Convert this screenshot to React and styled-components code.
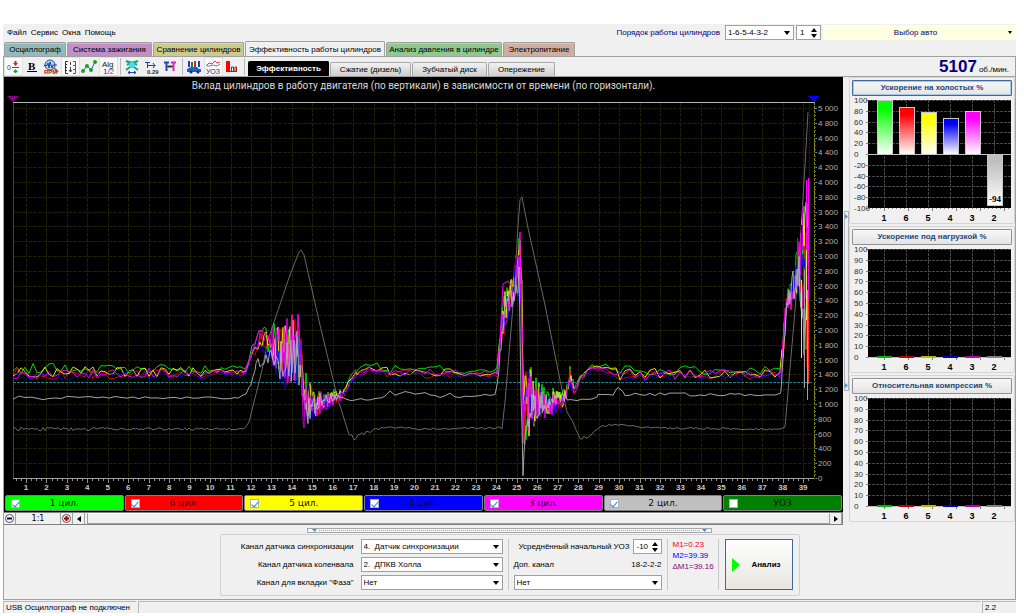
import React from 'react'
import styled, { createGlobalStyle } from 'styled-components'

const CYLINDERS = [
    { name: '1', title: '1 цил.', color: '#00ff00', dim: '#00b800', bar: 100, offset: -3, checked: true },
    { name: '6', title: '6 цил.', color: '#ff0000', dim: '#c00000', bar: 87, offset: 2, checked: true },
    { name: '5', title: '5 цил.', color: '#ffff00', dim: '#b8b800', bar: 77, offset: 0, checked: true },
    { name: '4', title: '4 цил.', color: '#0000ff', dim: '#0000c8', bar: 66, offset: 3, checked: true },
    { name: '3', title: '3 цил.', color: '#ff00ff', dim: '#b800b8', bar: 80, offset: 1, checked: true },
    { name: '2', title: '2 цил.', color: '#c0c0c0', dim: '#808080', bar: -94, offset: 0, checked: true },
]

const TABS = [
    { title: 'Осциллограф', width: 62, color: '#93bab9' },
    { title: 'Система зажигания', width: 85, color: '#c48ec4' },
    { title: 'Сравнение цилиндров', width: 91, color: '#cbca8f' },
    { title: 'Эффективность работы цилиндров', width: 140, active: true },
    { title: 'Анализ давления в цилиндре', width: 116, color: '#90c890' },
    { title: 'Электропитание', width: 72, color: '#cfae9f' },
]

const SUB_TABS = [
    { title: 'Эффективность', width: 81, active: true },
    { title: 'Сжатие (дизель)', width: 81 },
    { title: 'Зубчатый диск', width: 75 },
    { title: 'Опережение', width: 67 },
]

// every point is [x, y, noise, step]
const CYLINDER_PATH = [
    [13, 372, 6, 4], [240, 372, 4, 4], [246, 370, 2, 3], [252, 352, 4, 3], [260, 340, 9, 2],
    [266, 340, 14, 2], [272, 346, 20, 1], [278, 350, 26, 1], [285, 352, 34, 1], [297, 346, 38, 1], [301, 352, 24, 1],
    [303, 395, 20, 1], [308, 398, 22, 1], [315, 403, 14, 1], [326, 400, 9, 1], [338, 397, 6, 1], [344, 392, 3, 2],
    [350, 382, 4, 3], [357, 372, 3, 4], [372, 368, 3, 5], [390, 372, 5, 5], [497, 373, 3, 2],
    [501, 335, 12, 1], [505, 308, 20, 1], [511, 292, 14, 1], [517, 272, 28, 1], [520, 265, 34, 1],
    [522, 340, 60, 1], [523, 410, 45, 1], [528, 402, 38, 1], [536, 402, 24, 1], [545, 403, 14, 1],
    [562, 400, 9, 1], [567, 392, 5, 1], [570, 375, 8, 1], [574, 390, 4, 3], [580, 378, 5, 4],
    [592, 367, 3, 5], [606, 370, 3, 5], [620, 374, 6, 5], [780, 373, 4, 2], [783, 352, 14, 1],
    [786, 304, 14, 1], [793, 290, 16, 1], [798, 270, 24, 1], [801, 270, 44, 1], [803, 275, 64, 1],
    [806, 285, 90, 1], [810, 290, 95, 1],
]

const SECOND_PATH = [
    [13, 398, 2, 6], [238, 398, 1, 4], [246, 393, 1, 3], [251, 384, 1, 2], [256, 362, 5, 2],
    [268, 358, 12, 2], [280, 362, 20, 1], [297, 356, 26, 1], [302, 372, 20, 1], [305, 415, 14, 1],
    [310, 405, 16, 1], [320, 400, 8, 1], [338, 396, 3, 3], [346, 400, 1, 5], [372, 399, 1, 5],
    [385, 394, 3, 5], [495, 396, 2, 2], [499, 365, 8, 1], [504, 312, 12, 1], [512, 298, 12, 1],
    [519, 280, 16, 1], [521, 390, 10, 1], [523, 475, 2, 1], [525, 440, 10, 1], [530, 405, 22, 1],
    [545, 402, 10, 1], [568, 396, 4, 2], [572, 400, 1, 5], [592, 399, 1, 5], [598, 395, 2, 5],
    [613, 394, 2, 3], [618, 387, 1, 5], [625, 394, 2, 5], [778, 395, 1, 2], [781, 392, 1, 1], [784, 340, 4, 1],
    [788, 300, 10, 1], [799, 265, 26, 1], [803, 300, 60, 1], [805, 330, 70, 1], [809, 320, 70, 1],
]

const RPM_PATH = [
    [13, 429, 2, 2], [244, 429, 1, 2], [249, 422, 0, 4], [262, 370, 0, 4], [268, 340, 0, 5],
    [278, 310, 1, 5], [290, 275, 0, 5], [299, 252, 0, 1], [301, 250, 0, 2], [304, 255, 0, 4],
    [320, 325, 0, 5], [338, 400, 0, 4], [349, 434, 1, 3], [354, 438, 2, 2], [372, 430, 2, 2],
    [390, 427, 1, 2], [420, 429, 1, 2], [502, 428, 1, 2], [505, 402, 0, 2], [511, 330, 0, 2],
    [515, 280, 0, 2], [518, 225, 0, 1], [520, 200, 0, 1], [522, 197, 0, 1], [528, 228, 0, 4],
    [545, 305, 0, 5], [560, 380, 0, 4], [567, 412, 0, 4], [573, 422, 0, 3], [580, 438, 2, 2],
    [588, 437, 1, 3], [600, 427, 1, 3], [615, 424, 1, 3], [650, 428, 1, 2], [780, 429, 1, 2],
    [785, 427, 0, 2], [789, 380, 0, 2], [795, 310, 0, 2], [801, 230, 0, 2], [805, 165, 0, 2],
    [808, 112, 0, 2], [810, 103, 0, 2],
]

const makeTrace = (points, seed, offset) => {
    let state = seed * 7919 + 17
    const random = () => {
        state = (state * 16807) % 2147483647
        return state / 2147483647
    }
    let d = ''
    for (let i = 0; i < points.length - 1; i++) {
        const [x0, y0, n0, step] = points[i]
        const [x1, y1, n1] = points[i + 1]
        for (let x = x0; x < x1; x += step) {
            const k = (x - x0) / (x1 - x0)
            const noise = (n0 + (n1 - n0) * k) * (random() * 2 - 1)
            const y = Math.min(477, Math.max(103, y0 + (y1 - y0) * k + offset + noise))
            d += `${d ? 'L' : 'M'}${x} ${y.toFixed(1)}`
        }
    }
    return d
}

const xAt = (value) => 26 + (value - 1) * 20.45
const yAt = (value) => 478 - value * 0.074
const range = (count) => Array.from({ length: count }, (_, i) => i)
const thousands = (value) => String(value).replace(/(\d)(\d{3})$/, '$1 $2')

const MainChart = () => (
    <ChartSvg viewBox="4 94 839 401" role="img" aria-label="Вклад цилиндров">
        <g stroke="#1f1f05" strokeDasharray="4 1">
            {range(39).map((i) => <path key={i} d={`M${Math.round(xAt(i + 1)) + 0.5} 103V478`} />)}
            {range(25).map((i) => <path key={i} d={`M13 ${Math.round(yAt((i + 1) * 200)) + 0.5}H813`} />)}
        </g>
        <path d="M13.5 103V478" stroke="#1f5a1f" />
        <path d="M13 102.5H814" stroke="#b8b8b8" />
        <path d="M13 478.5H814" stroke="#a0a0a0" />
        <path d="M814.5 102V478" stroke="#8a8a30" strokeDasharray="3 1" />
        <g stroke="#909090">
            {range(156).map((i) => (
                <path key={i} d={`M${Math.round(xAt(0.5 + i / 4)) + 0.5} 479v${i % 4 === 2 ? 4 : 2}`} />
            ))}
            {range(26).map((i) => <path key={i} d={`M814 ${Math.round(yAt(i * 200)) + 0.5}h3`} />)}
            {range(100).map((i) => <path key={i} d={`M814 ${Math.round(yAt(i * 50)) + 0.5}h2`} stroke="#606030" />)}
        </g>
        <path d="M13 382.5H813" stroke="#008c8c" strokeDasharray="3 1" />
        <g fill="none" strokeLinejoin="round" strokeWidth="1">
            <path d={makeTrace(RPM_PATH, 3, 0)} stroke="#686868" />
            {CYLINDERS.slice(0, 5).map((c, i) => (
                <path key={c.name} d={makeTrace(CYLINDER_PATH, i + 11, c.offset)} stroke={c.color} opacity="0.85" />
            ))}
            <path d={makeTrace(SECOND_PATH, 29, 0)} stroke="#b4b4b4" opacity="0.9" />
            <path d="M243 374L250 358L256 340L259 330L264 332L268 336M298 336L298 314L300 345" stroke="#e000e0" />
            <path d="M497 374L500 340L503 284L508 281L511 285M519 250L520 232L521 300L523 345" stroke="#ff00ff" />
            <path d="M301 340L303 420L304 428L305 400" stroke="#c000c0" />
            <path d="M801.5 225V330" stroke="#0000d0" />
            <path d="M802.5 205V250M797.5 238V260" stroke="#c000c0" />
            <path d="M804.5 270V388M807.5 290V400" stroke="#a0a0a0" />
            <path d="M801.5 280V358M806.5 240V320" stroke="#e8e060" />
            <path d="M808.5 260V384" stroke="#ff3030" />
            <path d="M809.5 104V250" stroke="#0000b8" />
            <path d="M806.5 180V250M808.5 178V300" stroke="#ff00ff" />
        </g>
        <path d="M7 96H19L13 102Z" fill="#8a008a" />
        <path d="M808 96H820L814 102Z" fill="#0000ff" />
        <g fill="#c8c8c8" fontSize="8" fontWeight="700" textAnchor="middle">
            {range(39).map((i) => <text key={i} x={xAt(i + 1)} y="490">{i + 1}</text>)}
        </g>
        <g fill="#b0b0b0" fontSize="8">
            {range(26).map((i) => <text key={i} x="818" y={yAt(i * 200) + 3}>{thousands(i * 200)}</text>)}
        </g>
    </ChartSvg>
)

const BarChart = ({ signed }) => {
    const zero = signed ? 58 : 112
    const label = (i) => (signed ? 100 - i * 20 : 100 - i * 10)
    const tick = (i) => 4 + (i * 108) / 10
    return (
        <ChartSvg viewBox="0 0 160 127">
            <defs>
                {CYLINDERS.map((c) => (
                    <linearGradient key={c.name} id={`bar${c.name}`} x1="0" y1="0" x2="0" y2="1">
                        <stop offset="0.15" stopColor={c.color} />
                        <stop offset="1" stopColor="#ffffff" />
                    </linearGradient>
                ))}
            </defs>
            <path d="M16 4H159V112H16Z" fill="#000" />
            <g stroke="#484848" strokeDasharray="3 1">
                {range(10).map((i) => <path key={i} d={`M16 ${Math.round(tick(i)) + 0.5}H159`} />)}
                {CYLINDERS.map((c, i) => <path key={c.name} d={`M${32 + i * 22}.5 4V112`} />)}
            </g>
            <g stroke="#808080">
                {range(11).map((i) => <path key={i} d={`M14 ${Math.round(tick(i)) + 0.5}h2`} />)}
                {range(36).map((i) => <path key={i} d={`M${16 + i * 4}.5 112v${i % 6 === 4 ? 3 : 1}`} />)}
            </g>
            <path d={`M16 ${zero}.5H159`} stroke="#c0c0c0" />
            {CYLINDERS.map((c, i) => {
                const x = 25 + i * 22
                const size = Math.round(Math.abs(c.bar) * 0.54)
                if (!signed) return <path key={c.name} d={`M${x} 112h15`} stroke={c.dim} strokeWidth="2" />
                return (
                    <rect
                        key={c.name} x={x + 0.5} y={c.bar > 0 ? zero - size + 0.5 : zero + 0.5} width="15" height={size}
                        fill={`url(#bar${c.name})`} stroke="#c8c8c8"
                    />
                )
            })}
            {signed && (
                <text x="143" y="106" fontSize="9" fontWeight="700" fontFamily="Liberation Serif, serif" textAnchor="middle">
                    -94
                </text>
            )}
            <g fill="#303030" fontSize="8">
                {range(11).map((i) => <text key={i} x="2" y={tick(i) + 3}>{label(i)}</text>)}
            </g>
            <g fill="#000" fontSize="9" fontWeight="700" textAnchor="middle">
                {CYLINDERS.map((c, i) => <text key={c.name} x={32 + i * 22} y="125">{c.name}</text>)}
            </g>
        </ChartSvg>
    )
}

const Dropdown = ({ id, label, options }) => (
    <SelectWrap>
        <Select id={id} aria-label={label}>
            {options.map((option) => <option key={option}>{option}</option>)}
        </Select>
        <SelectArrow viewBox="0 0 6 4"><path d="M0 0H6L3 4Z" /></SelectArrow>
    </SelectWrap>
)

const Spinner = ({ id, label, value, width }) => (
    <SpinnerWrap $width={width}>
        <SpinnerInput id={id} aria-label={label} type="text" defaultValue={value} />
        <SpinnerButtons>
            <SpinnerButton aria-label="Больше"><svg viewBox="0 0 6 4"><path d="M0 4H6L3 0Z" /></svg></SpinnerButton>
            <SpinnerButton aria-label="Меньше"><svg viewBox="0 0 6 4"><path d="M0 0H6L3 4Z" /></svg></SpinnerButton>
        </SpinnerButtons>
    </SpinnerWrap>
)

const ICONS = {
    zero: (
        <>
            <text x="3" y="12" fontSize="7" fill="#404060">0</text>
            <path d="M8 9.5H15" stroke="#008040" />
            <path d="M11.5 8L9 5H10.5V3H12.5V5H14Z" fill="#e02020" />
            <path d="M11.5 11L14 14H12.5V15H10.5V14H9Z" fill="#20a040" />
        </>
    ),
    bold: (
        <>
            <text x="5" y="12" fontSize="11" fontWeight="700" fontFamily="Liberation Serif, serif">B</text>
            <path d="M4 13.5H14" stroke="#000" />
        </>
    ),
    rpm: (
        <>
            <circle cx="8" cy="7" r="5" fill="#a8d8f4" stroke="#305090" />
            <path d="M12 10L16 14" stroke="#a07030" strokeWidth="2" />
            <path d="M2 7.5H5L6 5L7 10L8 4L10 10L11 7H15" stroke="#2040a0" fill="none" />
            <text x="2" y="16" fontSize="6" fontWeight="700" fill="#b02020">RPM</text>
        </>
    ),
    ruler: (
        <>
            <path d="M7 3.5H4.5V15.5H7M4 6.5H6M4 9.5H6M4 12.5H6" stroke="#303030" fill="none" />
            <path d="M9.5 4V7M9.5 9V14M8 12L9.5 14L11 12" stroke="#404040" fill="none" />
            <path d="M12 3.5H14.5V7.5H12M14.5 7.5V11.5H12M12 11.5H14.5V15.5H12" stroke="#e02020" fill="none" />
        </>
    ),
    nodes: (
        <>
            <path d="M3 13L7 8L11 12L15 4" stroke="#2060c0" fill="none" />
            <g fill="#20a020">
                <circle cx="3" cy="13" r="2" /><circle cx="7" cy="8" r="2" />
                <circle cx="11" cy="12" r="2" /><circle cx="15" cy="4" r="2" />
            </g>
        </>
    ),
    alg: (
        <>
            <text x="3" y="9" fontSize="8" fill="#202020">Alg</text>
            <text x="4" y="16" fontSize="8" fill="#2020e0">1/<tspan fill="#e02020">2</tspan></text>
        </>
    ),
    engine: (
        <>
            <path d="M3 3Q9 6 15 3M4 7Q9 3 14 7M3 12L7 9H11L15 12" stroke="#20a080" fill="none" strokeWidth="2" />
            <circle cx="9" cy="7" r="3" fill="#40e0e8" />
            <path d="M5 14.5H13M7 13L5 14.5L7 16M11 13L13 14.5L11 16" stroke="#2040c0" fill="none" />
        </>
    ),
    shift: (
        <>
            <path d="M3 4.5H8M5.5 4V10M5 7.5H13M11 5L13 7.5L11 10" stroke="#2040a0" fill="none" />
            <text x="5" y="16" fontSize="6" fontWeight="700" fill="#303030">0.29</text>
        </>
    ),
    marks: (
        <>
            <path d="M3 4.5H8M5.5 4V13" stroke="#2040c0" strokeWidth="2" fill="none" />
            <path d="M10 4.5H15M12.5 4V13" stroke="#e020c0" strokeWidth="2" fill="none" />
            <path d="M6 8.5H12M8 7V10M10 7V10" stroke="#303030" fill="none" />
        </>
    ),
    car: (
        <>
            <path d="M4 3V9M14 3V9" stroke="#2040c0" strokeWidth="2" />
            <path d="M7 4V9" stroke="#208040" strokeWidth="2" />
            <path d="M10 3V9" stroke="#e02020" strokeWidth="2" />
            <path d="M2 11L6 9H12L14 11H16V14H2Z" fill="#2060d0" />
            <circle cx="6" cy="14" r="1.5" fill="#203060" /><circle cx="13" cy="14" r="1.5" fill="#203060" />
        </>
    ),
    timing: (
        <>
            <path d="M2 8L5 5L8 6L11 3L13 5L16 4" stroke="#e04040" fill="none" />
            <path d="M3 8L6 8L9 7L13 8L16 6" stroke="#6080d0" fill="none" />
            <text x="2" y="16" fontSize="7" fill="#202090">УОЗ</text>
        </>
    ),
    bars: (
        <>
            <path d="M3 3H7V13H3Z" fill="#ff0000" />
            <path d="M3 13.5H14M8.5 13V9H10.5V13M12 13V9H13.5V13" stroke="#a02020" fill="none" />
        </>
    ),
}

const TOOLS = [
    { icon: 'zero', title: 'Ноль', pressed: true }, { icon: 'bold', title: 'Толщина' }, { icon: 'rpm', title: 'Обороты' },
    { icon: 'ruler', title: 'Шкала', pressed: true }, { icon: 'nodes', title: 'Точки' },
    { icon: 'alg', title: 'Алгоритм', pressed: true, divider: true },
    { icon: 'engine', title: 'Растянуть' }, { icon: 'shift', title: 'Сдвиг' }, { icon: 'marks', title: 'Маркеры', divider: true },
    { icon: 'car', title: 'Автомобиль' }, { icon: 'timing', title: 'УОЗ', pressed: true },
    { icon: 'bars', title: 'Диаграмма', divider: true },
]

const App = () => (
    <>
        <GlobalStyle />
        <Window>
            <MenuBar>
                <Menu>
                    {['Файл', 'Сервис', 'Окна', 'Помощь'].map((item) => <MenuItem key={item}>{item}</MenuItem>)}
                </Menu>
                <OrderLabel htmlFor="order">Порядок работы цилиндров</OrderLabel>
                <OrderSelect><Dropdown id="order" options={['1-6-5-4-3-2']} /></OrderSelect>
                <Spinner label="Номер цилиндра" value="1" width={25} />
                <CarButton>
                    <span>Выбор авто</span>
                    <svg width="4" height="3" viewBox="0 0 4 3"><path d="M0 0H4L2 3Z" /></svg>
                </CarButton>
            </MenuBar>
            <TabRow>
                {TABS.map((tab) => (
                    <Tab key={tab.title} $width={tab.width} $color={tab.color} $active={tab.active}>{tab.title}</Tab>
                ))}
            </TabRow>
            <Page>
                <Toolbar>
                    {TOOLS.map((tool) => (
                        <React.Fragment key={tool.icon}>
                            <Tool title={tool.title} aria-label={tool.title} $pressed={tool.pressed}>
                                <svg width="19" height="18" viewBox="0 0 19 18">{ICONS[tool.icon]}</svg>
                            </Tool>
                            {tool.divider && <ToolDivider />}
                        </React.Fragment>
                    ))}
                    <SubTabs>
                        {SUB_TABS.map((tab) => (
                            <SubTab key={tab.title} $width={tab.width} $active={tab.active}>{tab.title}</SubTab>
                        ))}
                    </SubTabs>
                    <Rpm><strong>5107</strong><span>об./мин.</span></Rpm>
                </Toolbar>
                <Main>
                    <ChartPanel>
                        <ChartTitle>
                            Вклад цилиндров в работу двигателя (по вертикали) в зависимости от времени (по горизонтали).
                        </ChartTitle>
                        <MainChart />
                        <Legend>
                            {[...CYLINDERS, { title: 'УОЗ', color: '#008000' }].map((item) => (
                                <LegendItem key={item.title} $color={item.color}>
                                    <Check type="checkbox" defaultChecked={item.checked} />
                                    <span>{item.title}</span>
                                </LegendItem>
                            ))}
                        </Legend>
                        <ScrollRow>
                            <ScrollButton aria-label="Уменьшить">
                                <svg width="11" height="11" viewBox="0 0 11 11">
                                    <circle cx="5.5" cy="5.5" r="4" fill="#fff" stroke="#505050" />
                                    <path d="M3 5.5H8" stroke="#000080" strokeWidth="2" />
                                </svg>
                            </ScrollButton>
                            <Scale>1:1</Scale>
                            <ScrollButton aria-label="Увеличить">
                                <svg width="11" height="11" viewBox="0 0 11 11">
                                    <circle cx="5.5" cy="5.5" r="4" fill="#fff" stroke="#505050" />
                                    <path d="M3 5.5H8M5.5 3V8" stroke="#a00000" strokeWidth="2" />
                                </svg>
                            </ScrollButton>
                            <ScrollButton aria-label="Влево">
                                <svg width="4" height="6" viewBox="0 0 4 6"><path d="M4 0V6L0 3Z" /></svg>
                            </ScrollButton>
                            <ScrollThumb />
                            <ScrollButton aria-label="Вправо">
                                <svg width="4" height="6" viewBox="0 0 4 6"><path d="M0 0V6L4 3Z" /></svg>
                            </ScrollButton>
                        </ScrollRow>
                    </ChartPanel>
                    <SideSplitter>
                        <SideGrip>
                            <svg width="3" height="5" viewBox="0 0 3 5"><path d="M0 0V5L3 2.5Z" fill="#2f9bff" /></svg>
                            <svg width="3" height="5" viewBox="0 0 3 5"><path d="M0 0V5L3 2.5Z" fill="#2f9bff" /></svg>
                        </SideGrip>
                    </SideSplitter>
                    <Side>
                        <Group>
                            <GroupButton $active>Ускорение на холостых %</GroupButton>
                            <BarChart signed />
                        </Group>
                        <Group>
                            <GroupButton>Ускорение под нагрузкой %</GroupButton>
                            <BarChart />
                        </Group>
                        <Group>
                            <GroupButton>Относительная компрессия %</GroupButton>
                            <BarChart />
                        </Group>
                    </Side>
                </Main>
                <BottomGrip>
                    <svg width="5" height="3" viewBox="0 0 5 3"><path d="M0 0H5L2.5 3Z" fill="#2f9bff" /></svg>
                    <GripDots />
                    <svg width="5" height="3" viewBox="0 0 5 3"><path d="M0 0H5L2.5 3Z" fill="#2f9bff" /></svg>
                </BottomGrip>
                <Settings>
                    <Channels>
                        <label htmlFor="sync">Канал датчика синхронизации</label>
                        <Dropdown id="sync" options={['4.\u00a0 Датчик синхронизации']} />
                        <label htmlFor="crank">Канал датчика коленвала</label>
                        <Dropdown id="crank" options={['2.\u00a0 ДПКВ Холла']} />
                        <label htmlFor="phase">Канал для вкладки "Фаза"</label>
                        <Dropdown id="phase" options={['Нет']} />
                    </Channels>
                    <Divider />
                    <Extra>
                        <ExtraRow $end>
                            <label htmlFor="uoz">Усреднённый начальный УОЗ</label>
                            <Spinner id="uoz" value="-10" width={29} />
                        </ExtraRow>
                        <ExtraRow>
                            <label htmlFor="extra">Доп. канал</label>
                            <span>18-2-2-2</span>
                        </ExtraRow>
                        <Dropdown id="extra" options={['Нет']} />
                    </Extra>
                    <Divider />
                    <Marks>
                        <Mark $color="#ff0000">M1=0.23</Mark>
                        <Mark $color="#0000ff">M2=39.39</Mark>
                        <Mark $color="#800080">ΔM1=39.16</Mark>
                    </Marks>
                    <Divider />
                    <AnalyzeButton>
                        <svg width="8" height="14" viewBox="0 0 8 14"><path d="M0 0L8 7L0 14Z" fill="#00ff00" /></svg>
                        <span>Анализ</span>
                    </AnalyzeButton>
                </Settings>
            </Page>
            <StatusBar>
                <StatusCell $width={133}>USB Осциллограф не подключен</StatusCell>
                <StatusCell $grow />
                <StatusCell $width={34}>2.2</StatusCell>
            </StatusBar>
        </Window>
    </>
)

export default App

const GlobalStyle = createGlobalStyle`
    * {
        box-sizing: border-box;
    }
    body {
        margin: 0;
        background: #ffffff;
        font-family: "Liberation Sans", Arial, sans-serif;
        font-size: 8px;
        line-height: 10px;
        color: #000000;
    }
    button, input, select {
        margin: 0;
        padding: 0;
        border: 0;
        border-radius: 0;
        color: inherit;
        font: inherit;
        background: none;
    }
    svg {
        display: block;
    }
`
const Window = styled.div`
    margin: 24px 8px 0 3px;
    background: #f0f0f0;
    display: flex;
    flex-direction: column;
`
const MenuBar = styled.header`
    display: flex;
    align-items: center;
    height: 17px;
`
const Menu = styled.nav`
    display: flex;
    flex: 1;
    gap: 4px;
    padding-left: 4px;
`
const MenuItem = styled.button`
    white-space: nowrap;
`
const OrderLabel = styled.label`
    color: #000080;
    margin-right: 5px;
    white-space: nowrap;
`
const OrderSelect = styled.div`
    width: 69px;
    margin-right: 2px;
`
const CarButton = styled.button`
    display: flex;
    align-items: center;
    width: 193px;
    height: 15px;
    margin-left: 2px;
    padding-right: 4px;
    background: #ffffe1;
    color: #000080;
    span {
        flex: 1;
    }
`
const SelectWrap = styled.div`
    display: grid;
    align-items: center;
    width: 100%;
`
const Select = styled.select`
    grid-area: 1 / 1;
    appearance: none;
    height: 15px;
    width: 100%;
    padding: 0 2px;
    border: 1px solid #a0a0a0;
    background: #ffffff;
`
const SelectArrow = styled.svg`
    grid-area: 1 / 1;
    justify-self: end;
    width: 6px;
    height: 4px;
    margin-right: 4px;
    pointer-events: none;
`
const SpinnerWrap = styled.div`
    display: flex;
    width: ${props => props.$width}px;
    height: 15px;
    border: 1px solid #a0a0a0;
    background: #ffffff;
`
const SpinnerInput = styled.input`
    flex: 1;
    min-width: 0;
    padding-left: 3px;
`
const SpinnerButtons = styled.div`
    display: flex;
    flex-direction: column;
    justify-content: center;
    gap: 2px;
    padding-right: 3px;
`
const SpinnerButton = styled.button`
    width: 6px;
    height: 4px;
`
const TabRow = styled.nav`
    display: flex;
    align-items: flex-end;
    gap: 1px;
    height: 15px;
    padding-left: 1px;
`
const Tab = styled.button`
    width: ${props => props.$width}px;
    height: ${props => props.$active ? '16px' : '14px'};
    margin-bottom: ${props => props.$active ? '-1px' : '0'};
    border: 1px solid #a0a0a0;
    border-bottom: 0;
    border-radius: 2px 2px 0 0;
    background: ${props => props.$active ? '#f0f0f0' : props.$color};
    box-shadow: inset 0 1px rgba(255, 255, 255, 0.3);
    white-space: nowrap;
`
const Page = styled.main`
    display: flex;
    flex-direction: column;
    border: 1px solid #a0a0a0;
`
const Toolbar = styled.div`
    display: flex;
    align-items: stretch;
    height: 20px;
    border-bottom: 1px solid #a0a0a0;
`
const Tool = styled.button`
    padding: 0;
    width: 19px;
    background: ${props => props.$pressed ? '#fafafa' : 'transparent'};
    box-shadow: ${props => props.$pressed ? 'inset 0 0 0 1px #e0e0e0' : 'none'};
`
const ToolDivider = styled.div`
    width: 1px;
    margin: 1px 2px;
    background: #b8b8b8;
`
const SubTabs = styled.div`
    display: flex;
    align-items: flex-end;
    flex: 1;
    gap: 1px;
    padding-left: 1px;
`
const SubTab = styled.button`
    width: ${props => props.$width}px;
    height: ${props => props.$active ? '15px' : '14px'};
    border: 1px solid ${props => props.$active ? '#000000' : '#a8a8a8'};
    border-bottom: 0;
    border-radius: 2px 2px 0 0;
    background: ${props => props.$active ? '#000000' : 'linear-gradient(#f2f2f2, #cfcfcf)'};
    color: ${props => props.$active ? '#ffffff' : '#000000'};
    font-weight: ${props => props.$active ? 700 : 400};
    white-space: nowrap;
`
const Rpm = styled.div`
    display: flex;
    align-items: baseline;
    gap: 2px;
    padding-right: 6px;
    color: #000080;
    strong {
        font-size: 17px;
        line-height: 19px;
    }
    span {
        color: #000000;
    }
`
const Main = styled.div`
    display: flex;
    align-items: flex-start;
`
const ChartPanel = styled.section`
    flex: 1;
    min-width: 0;
    background: #000000;
`
const ChartTitle = styled.h1`
    margin: 0;
    height: 17px;
    font-family: Roboto, sans-serif;
    font-size: 10px;
    font-weight: 400;
    line-height: 18px;
    text-align: center;
    color: #d8d8d8;
    white-space: nowrap;
`
const ChartSvg = styled.svg`
    width: 100%;
    height: auto;
`
const Legend = styled.div`
    display: flex;
    gap: 1px;
    padding: 1px;
    padding-top: 0;
`
const LegendItem = styled.label`
    display: flex;
    flex: 1;
    align-items: center;
    height: 16px;
    padding: 0 14px 0 5px;
    border: 1px solid #808080;
    border-radius: 2px;
    background: ${props => props.$color};
    font-family: "DejaVu Sans", sans-serif;
    font-size: 9px;
    color: #101010;
    span {
        flex: 1;
        text-align: center;
    }
`
const Check = styled.input`
    appearance: none;
    width: 9px;
    height: 9px;
    border: 1px solid #b0b0b0;
    background: #ffffff;
    &:checked::after {
        content: '';
        display: block;
        width: 3px;
        height: 6px;
        margin: 0 auto;
        border: solid #1f7fe8;
        border-width: 0 1px 1px 0;
        transform: rotate(40deg);
    }
`
const ScrollRow = styled.div`
    display: flex;
    height: 13px;
    border: 1px solid #808080;
    border-left: 0;
    background: #f0f0f0;
`
const ScrollButton = styled.button`
    display: flex;
    align-items: center;
    justify-content: center;
    width: 12px;
    border-right: 1px solid #a0a0a0;
`
const Scale = styled.div`
    width: 45px;
    border-right: 1px solid #a0a0a0;
    font-family: "DejaVu Sans", sans-serif;
    line-height: 12px;
    text-align: center;
`
const ScrollThumb = styled.div`
    flex: 1;
    margin-left: 2px;
    border: 1px solid #a0a0a0;
    border-top-color: #ffffff;
`
const SideSplitter = styled.div`
    display: flex;
    align-items: center;
    justify-content: center;
    align-self: stretch;
    width: 6px;
`
const SideGrip = styled.div`
    display: flex;
    flex-direction: column;
    justify-content: space-between;
    align-items: center;
    width: 5px;
    height: 180px;
    padding: 2px 0;
    border: 1px solid #b0b0b0;
    background: #e4f0fa;
`
const Side = styled.aside`
    display: flex;
    flex-direction: column;
    gap: 2px;
    width: 166px;
`
const Group = styled.section`
    padding: 2px 2px 0;
    border: 1px solid #d4d4d4;
    border-radius: 2px;
`
const GroupButton = styled.button`
    width: 100%;
    height: 16px;
    border: 1px solid ${props => props.$active ? '#3c6a9c' : '#909090'};
    border-radius: 1px;
    background: linear-gradient(#f8f8f8, #e4e4e4);
    box-shadow: ${props => props.$active ? 'inset 0 0 0 1px #a8c8e4' : 'none'};
    color: #1c4878;
    font-size: 8px;
    font-weight: 700;
`
const BottomGrip = styled.div`
    display: flex;
    justify-content: space-between;
    align-items: center;
    align-self: center;
    width: 40%;
    height: 5px;
    margin-top: 3px;
    padding: 0 4px;
    border: 1px solid #a8a8a8;
    background: #f4f8fc;
`
const GripDots = styled.div`
    flex: 1;
    margin: 0 2px;
    border-top: 1px dotted #6cb4f4;
`
const Settings = styled.section`
    display: flex;
    align-self: center;
    margin: 1px 0 3px;
    padding: 4px 6px 5px 16px;
    border: 1px solid #d0d0d0;
    border-radius: 2px;
    white-space: nowrap;
`
const Channels = styled.div`
    display: grid;
    grid-template-columns: 117px 142px;
    align-items: center;
    gap: 3px 7px;
    text-align: right;
`
const Divider = styled.div`
    width: 1px;
    margin: 0 5px;
    background: #c8c8c8;
`
const Extra = styled.div`
    display: flex;
    flex-direction: column;
    justify-content: space-between;
    width: 148px;
`
const ExtraRow = styled.div`
    display: flex;
    align-items: center;
    justify-content: ${props => props.$end ? 'flex-end' : 'space-between'};
    gap: 3px;
`
const Marks = styled.div`
    width: 40px;
    font-size: 8px;
    line-height: 11px;
`
const Mark = styled.div`
    color: ${props => props.$color};
`
const AnalyzeButton = styled.button`
    display: flex;
    align-items: center;
    gap: 12px;
    width: 68px;
    margin-left: 1px;
    padding-left: 6px;
    border: 1px solid #3c6a9c;
    background: linear-gradient(#ffffff, #e6e6de);
    font-weight: 700;
`
const StatusBar = styled.footer`
    display: flex;
    gap: 2px;
    margin-top: 1px;
`
const StatusCell = styled.div`
    flex: ${props => props.$grow ? '1' : 'none'};
    width: ${props => props.$grow ? 'auto' : `${props.$width}px`};
    height: 12px;
    padding-left: 2px;
    border-top: 1px solid #b8b8b8;
    border-left: 1px solid #b8b8b8;
    line-height: 11px;
    white-space: nowrap;
`
